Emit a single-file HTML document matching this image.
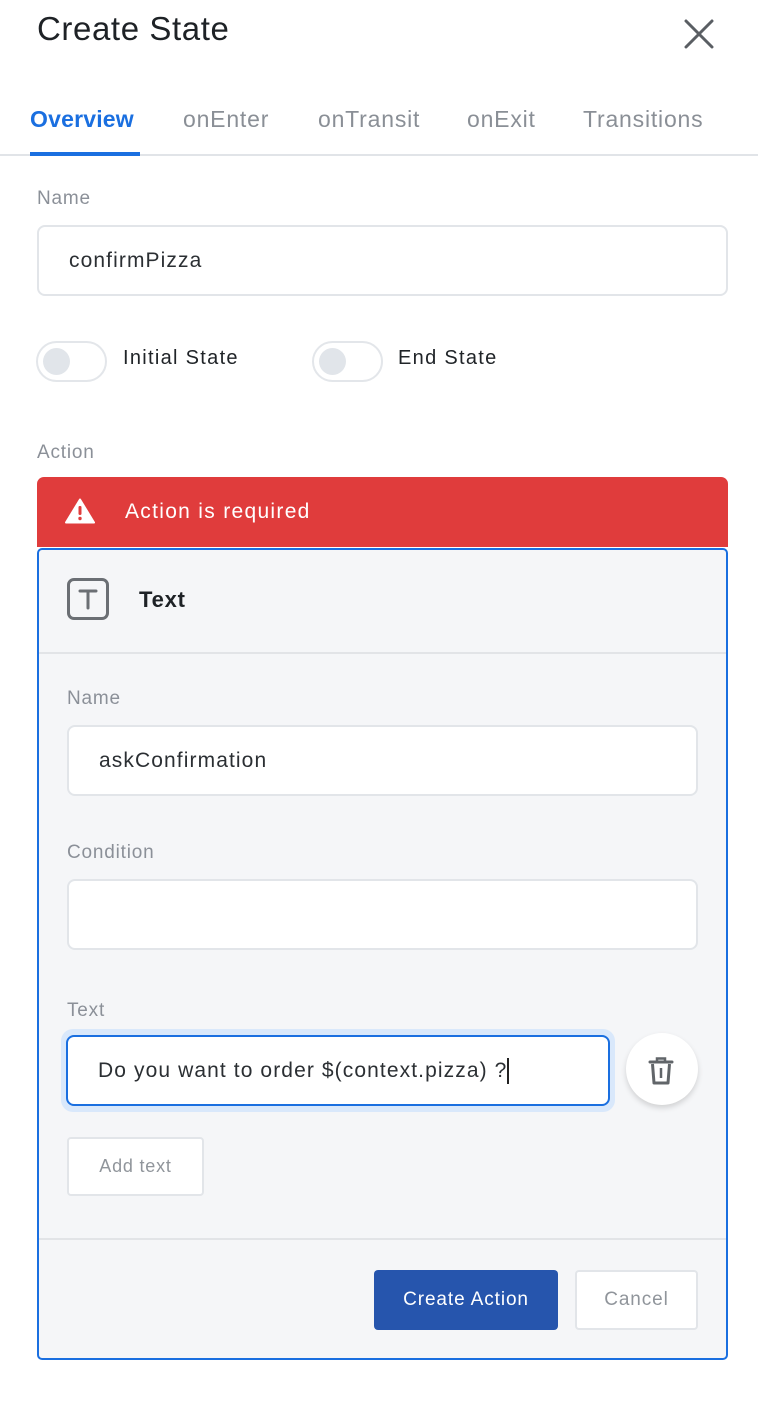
<!DOCTYPE html>
<html><head><meta charset="utf-8"><style>
*{box-sizing:border-box;margin:0;padding:0}
body{width:758px;height:1408px;background:#fff;position:relative;overflow:hidden;font-family:"Liberation Sans",sans-serif;color:#202428}
.a{position:absolute;white-space:nowrap}
.lbl{font-size:19px;color:#8b9098;letter-spacing:0.8px}
.inp{position:absolute;background:#fff;border:2px solid #e2e5e9;border-radius:8px;font-size:21px;color:#2b2f33;padding-left:30px;display:flex;align-items:center;letter-spacing:1.1px}
.tab{position:absolute;top:106px;font-size:23px;color:#8a8f96;letter-spacing:0.8px}
.tog{position:absolute;width:71px;height:41px;border:2px solid #e3e6ea;border-radius:21px;background:#fff}
.tog::after{content:"";position:absolute;left:5px;top:5px;width:27px;height:27px;border-radius:50%;background:#e1e5ea}
</style></head><body>
<div class="a" style="left:37px;top:10px;font-size:33px;color:#1e2226;letter-spacing:0.6px">Create State</div>
<svg class="a" style="left:684px;top:19px" width="30" height="30" viewBox="0 0 30 30"><path d="M2 2L28 28M28 2L2 28" stroke="#5a5e63" stroke-width="3" stroke-linecap="round"/></svg>
<div class="tab" style="left:30px;color:#1a6fe0;font-weight:bold;letter-spacing:0.2px">Overview</div>
<div class="tab" style="left:183px">onEnter</div>
<div class="tab" style="left:318px">onTransit</div>
<div class="tab" style="left:467px">onExit</div>
<div class="tab" style="left:583px">Transitions</div>
<div class="a" style="left:0;top:154px;width:758px;height:2px;background:#e1e4e8"></div>
<div class="a" style="left:30px;top:152px;width:110px;height:4px;background:#1a6fe0"></div>

<div class="a lbl" style="left:37px;top:188px">Name</div>
<div class="inp" style="left:37px;top:225px;width:691px;height:71px">confirmPizza</div>
<div class="tog" style="left:36px;top:341px"></div>
<div class="a" style="left:123px;top:347px;font-size:20px;letter-spacing:1.3px">Initial State</div>
<div class="tog" style="left:312px;top:341px"></div>
<div class="a" style="left:398px;top:347px;font-size:20px;letter-spacing:1.3px">End State</div>

<div class="a lbl" style="left:37px;top:442px">Action</div>
<div class="a" style="left:37px;top:477px;width:691px;height:70px;background:#e03c3c;border-radius:7px 7px 0 0"></div>
<svg class="a" style="left:65px;top:498px" width="30" height="26" viewBox="0 0 30 26"><path d="M15 1.5L29 24.5H1Z" fill="#fff" stroke="#fff" stroke-width="2" stroke-linejoin="round"/><rect x="13.5" y="8" width="3" height="9" rx="1.2" fill="#e03c3c"/><circle cx="15" cy="20.5" r="1.7" fill="#e03c3c"/></svg>
<div class="a" style="left:125px;top:500px;font-size:21px;color:#fff;letter-spacing:1.3px">Action is required</div>

<div class="a" style="left:37px;top:548px;width:691px;height:812px;border:2px solid #1a6fe0;border-radius:5px;background:#f5f6f8"></div>
<div class="a" style="left:67px;top:578px;width:42px;height:42px;border:3px solid #6b6f74;border-radius:7px"></div>
<svg class="a" style="left:67px;top:578px" width="42" height="42" viewBox="0 0 42 42"><path d="M13 13H29M21 13V30" stroke="#6b6f74" stroke-width="3" stroke-linecap="round"/></svg>
<div class="a" style="left:139px;top:587px;font-size:22px;font-weight:bold;color:#1e2226;letter-spacing:0.8px">Text</div>
<div class="a" style="left:39px;top:652px;width:687px;height:2px;background:#e2e4e7"></div>

<div class="a lbl" style="left:67px;top:688px">Name</div>
<div class="inp" style="left:67px;top:725px;width:631px;height:71px">askConfirmation</div>
<div class="a lbl" style="left:67px;top:842px">Condition</div>
<div class="inp" style="left:67px;top:879px;width:631px;height:71px"></div>
<div class="a lbl" style="left:67px;top:1000px">Text</div>
<div class="a" style="left:61px;top:1029px;width:554px;height:83px;border-radius:12px;background:#d9e8fb"></div>
<div class="inp" style="left:66px;top:1035px;width:544px;height:71px;border:2px solid #1a6fe0">Do you want to order $(context.pizza) ?<span style="display:inline-block;width:1.5px;height:26px;background:#222;margin-left:0px"></span></div>
<div class="a" style="left:626px;top:1033px;width:72px;height:72px;border-radius:50%;background:#fff;box-shadow:0 3px 6px rgba(0,0,0,0.15)"></div>
<svg class="a" style="left:648px;top:1056px" width="26" height="30" viewBox="0 0 26 30"><path d="M2 6H24" stroke="#616569" stroke-width="3" stroke-linecap="round"/><path d="M9 5V2.5H17V5" stroke="#616569" stroke-width="2.5" fill="none"/><path d="M4.5 8L6 27H20L21.5 8" stroke="#616569" stroke-width="3" fill="none" stroke-linejoin="round"/><path d="M13 12V22" stroke="#616569" stroke-width="2.5"/></svg>

<div class="a" style="left:67px;top:1137px;width:137px;height:59px;background:#fff;border:2px solid #e2e5e9;border-radius:4px;font-size:18px;color:#90959b;display:flex;align-items:center;justify-content:center;letter-spacing:0.8px">Add text</div>
<div class="a" style="left:39px;top:1238px;width:687px;height:2px;background:#e2e4e7"></div>
<div class="a" style="left:374px;top:1270px;width:184px;height:60px;background:#2655ad;border-radius:4px;font-size:19px;color:#fff;display:flex;align-items:center;justify-content:center;letter-spacing:0.9px">Create Action</div>
<div class="a" style="left:575px;top:1270px;width:123px;height:60px;background:#fff;border:2px solid #e2e5e9;border-radius:4px;font-size:19px;color:#90959b;display:flex;align-items:center;justify-content:center;letter-spacing:0.9px">Cancel</div>
</body></html>
